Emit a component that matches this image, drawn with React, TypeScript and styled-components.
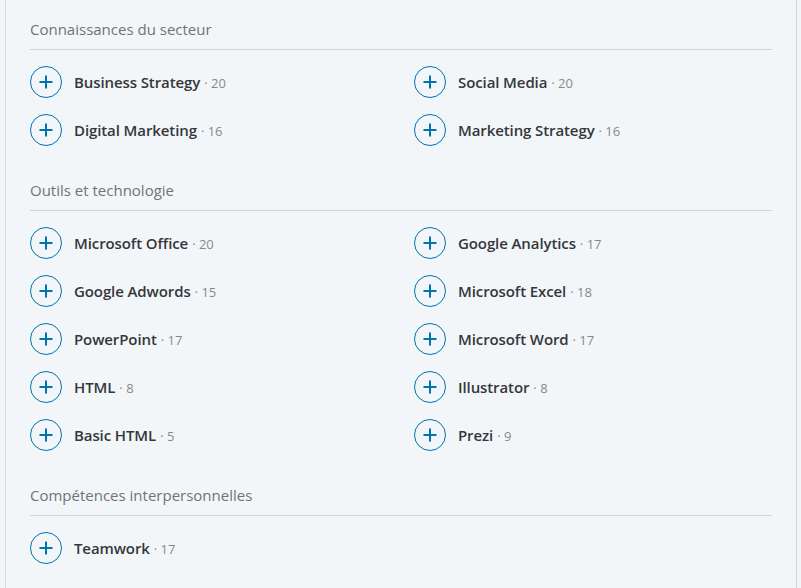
import React from "react";
import styled, { createGlobalStyle } from "styled-components";

const Global = createGlobalStyle`
  html, body { margin: 0; padding: 0; background: #f3f6f8; }
  body { font-family: "Open Sans", "Noto Sans", sans-serif; }
`;

const Panel = styled.div`
  margin-left: 5px;
  width: 792px;
  box-sizing: border-box;
  min-height: 600px;
  background: #f3f6f8;
  border-left: 1px solid #d9dcdf;
  border-right: 1px solid #d2d5d8;
  padding: 17px 24px 0 24px;
`;

const Section = styled.section`
  margin-bottom: 16px;
`;

const Heading = styled.h3`
  margin: 0;
  font-size: 15px;
  font-weight: 400;
  line-height: 24px;
  color: #707377;
  padding-bottom: 8px;
  border-bottom: 1px solid #d0d5d9;
`;

const List = styled.ul`
  list-style: none;
  margin: 0;
  padding: 16px 0;
  display: grid;
  grid-template-columns: 384px 1fr;
  row-gap: 16px;
`;

const Item = styled.li`
  display: flex;
  align-items: center;
  height: 32px;
`;

const AddButton = styled.button`
  width: 32px;
  height: 32px;
  border-radius: 50%;
  border: 1px solid #0073b1;
  background: transparent;
  padding: 0;
  display: flex;
  align-items: center;
  justify-content: center;
  color: #0073b1;
  margin-right: 12px;
  flex: none;
`;

const Name = styled.span`
  font-size: 15px;
  font-weight: 600;
  letter-spacing: -0.1px;
  color: #33373b;
`;

const Count = styled.span`
  font-size: 13px;
  color: #86898c;
  margin-left: 4px;
  padding-top: 2px;
`;

const PlusIcon = () => (
  <svg width="16" height="16" viewBox="0 0 16 16">
    <path d="M8 1.5v13M1.5 8h13" stroke="currentColor" strokeWidth="2" fill="none" />
  </svg>
);

type Skill = [string, number];

const sections: { title: string; skills: Skill[] }[] = [
  {
    title: "Connaissances du secteur",
    skills: [
      ["Business Strategy", 20],
      ["Social Media", 20],
      ["Digital Marketing", 16],
      ["Marketing Strategy", 16],
    ],
  },
  {
    title: "Outils et technologie",
    skills: [
      ["Microsoft Office", 20],
      ["Google Analytics", 17],
      ["Google Adwords", 15],
      ["Microsoft Excel", 18],
      ["PowerPoint", 17],
      ["Microsoft Word", 17],
      ["HTML", 8],
      ["Illustrator", 8],
      ["Basic HTML", 5],
      ["Prezi", 9],
    ],
  },
  {
    title: "Compétences interpersonnelles",
    skills: [["Teamwork", 17]],
  },
];

export default function App() {
  return (
    <>
      <Global />
      <Panel>
        {sections.map((s) => (
          <Section key={s.title}>
            <Heading>{s.title}</Heading>
            <List>
              {s.skills.map(([name, n]) => (
                <Item key={name}>
                  <AddButton aria-label={`Ajouter ${name}`}>
                    <PlusIcon />
                  </AddButton>
                  <Name>{name}</Name>
                  <Count>· {n}</Count>
                </Item>
              ))}
            </List>
          </Section>
        ))}
      </Panel>
    </>
  );
}
